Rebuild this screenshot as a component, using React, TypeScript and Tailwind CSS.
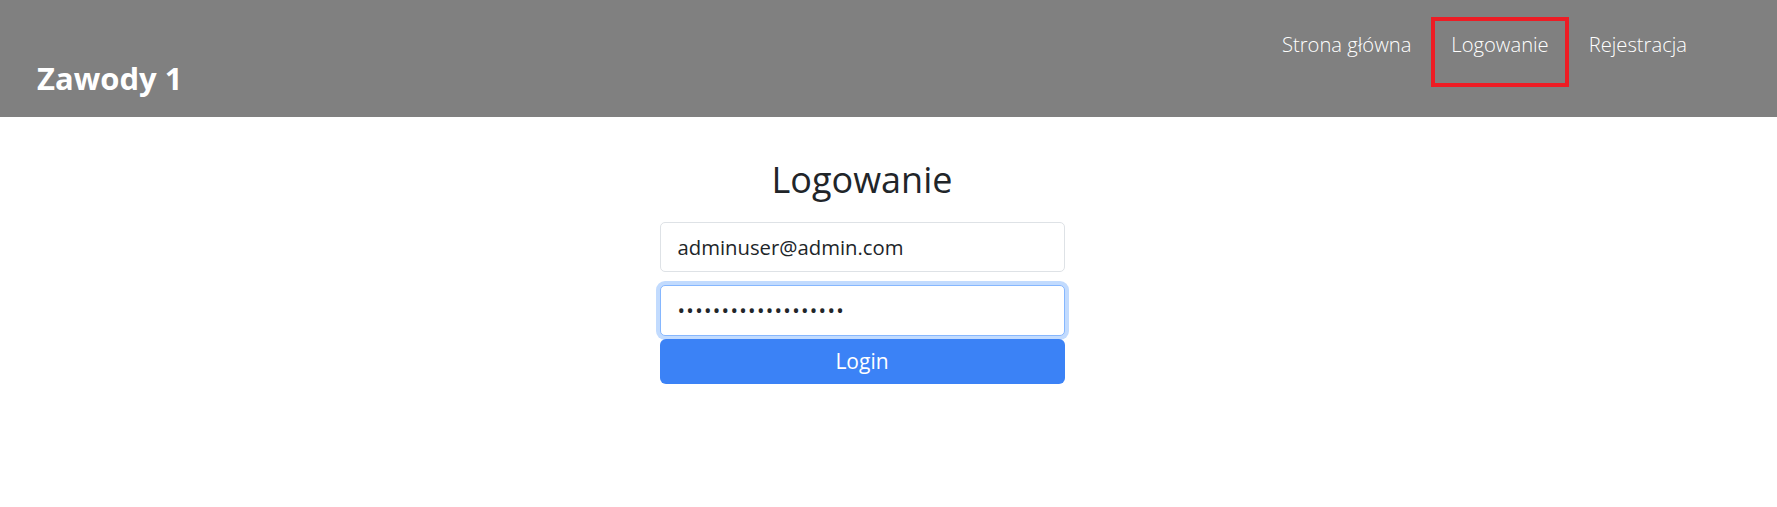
import React, { useState } from "react";

const navItems = ["Strona główna", "Logowanie", "Rejestracja"];

export default function App() {
  const [email, setEmail] = useState("adminuser@admin.com");
  const [password, setPassword] = useState("adminadminadmin1234");

  return (
    <div className="min-h-screen bg-white font-['Open_Sans','Noto_Sans',sans-serif] text-[#212529]">
      <header className="h-[117px] bg-[#808080] flex justify-between pl-[37px] pr-[70px]">
        <h1 className="self-end pb-[24px] text-[31px] leading-[30px] font-bold text-white">Zawody 1</h1>
        <nav className="flex items-start pt-[17px]">
          {navItems.map((item) => (
            <a
              key={item}
              href="#"
              className={`px-[16px] pt-[8px] pb-[24px] text-[20.2px] leading-[30px] font-light text-white border-4 ${
                item === "Logowanie" ? "border-[#ed1c24]" : "border-transparent"
              }`}
            >
              {item}
            </a>
          ))}
        </nav>
      </header>

      <main className="flex justify-center pr-[53px] pt-[41px]">
        <form className="w-[405px] flex flex-col items-center" onSubmit={(e) => e.preventDefault()}>
          <h2 className="text-[36px] leading-[44px] font-normal mb-[20px]">Logowanie</h2>
          <input
            type="email"
            value={email}
            onChange={(e) => setEmail(e.target.value)}
            className="w-full h-[50px] px-[17px] text-[20.3px] text-[#212529] bg-white border border-[#dee2e6] rounded-[5px] outline-none"
          />
          <input
            type="password"
            value={password}
            onChange={(e) => setPassword(e.target.value)}
            className="w-full h-[51px] mt-[13px] px-[17px] text-[20px] tracking-[1.3px] text-[#212529] bg-white border border-[#86b7fe] rounded-[5px] outline-none shadow-[0_0_0_4px_#c2dbfe]"
          />
          <button
            type="submit"
            className="w-full h-[45px] mt-[3px] bg-[#3b82f6] text-white text-[21px] rounded-[6px]"
          >
            Login
          </button>
        </form>
      </main>
    </div>
  );
}
